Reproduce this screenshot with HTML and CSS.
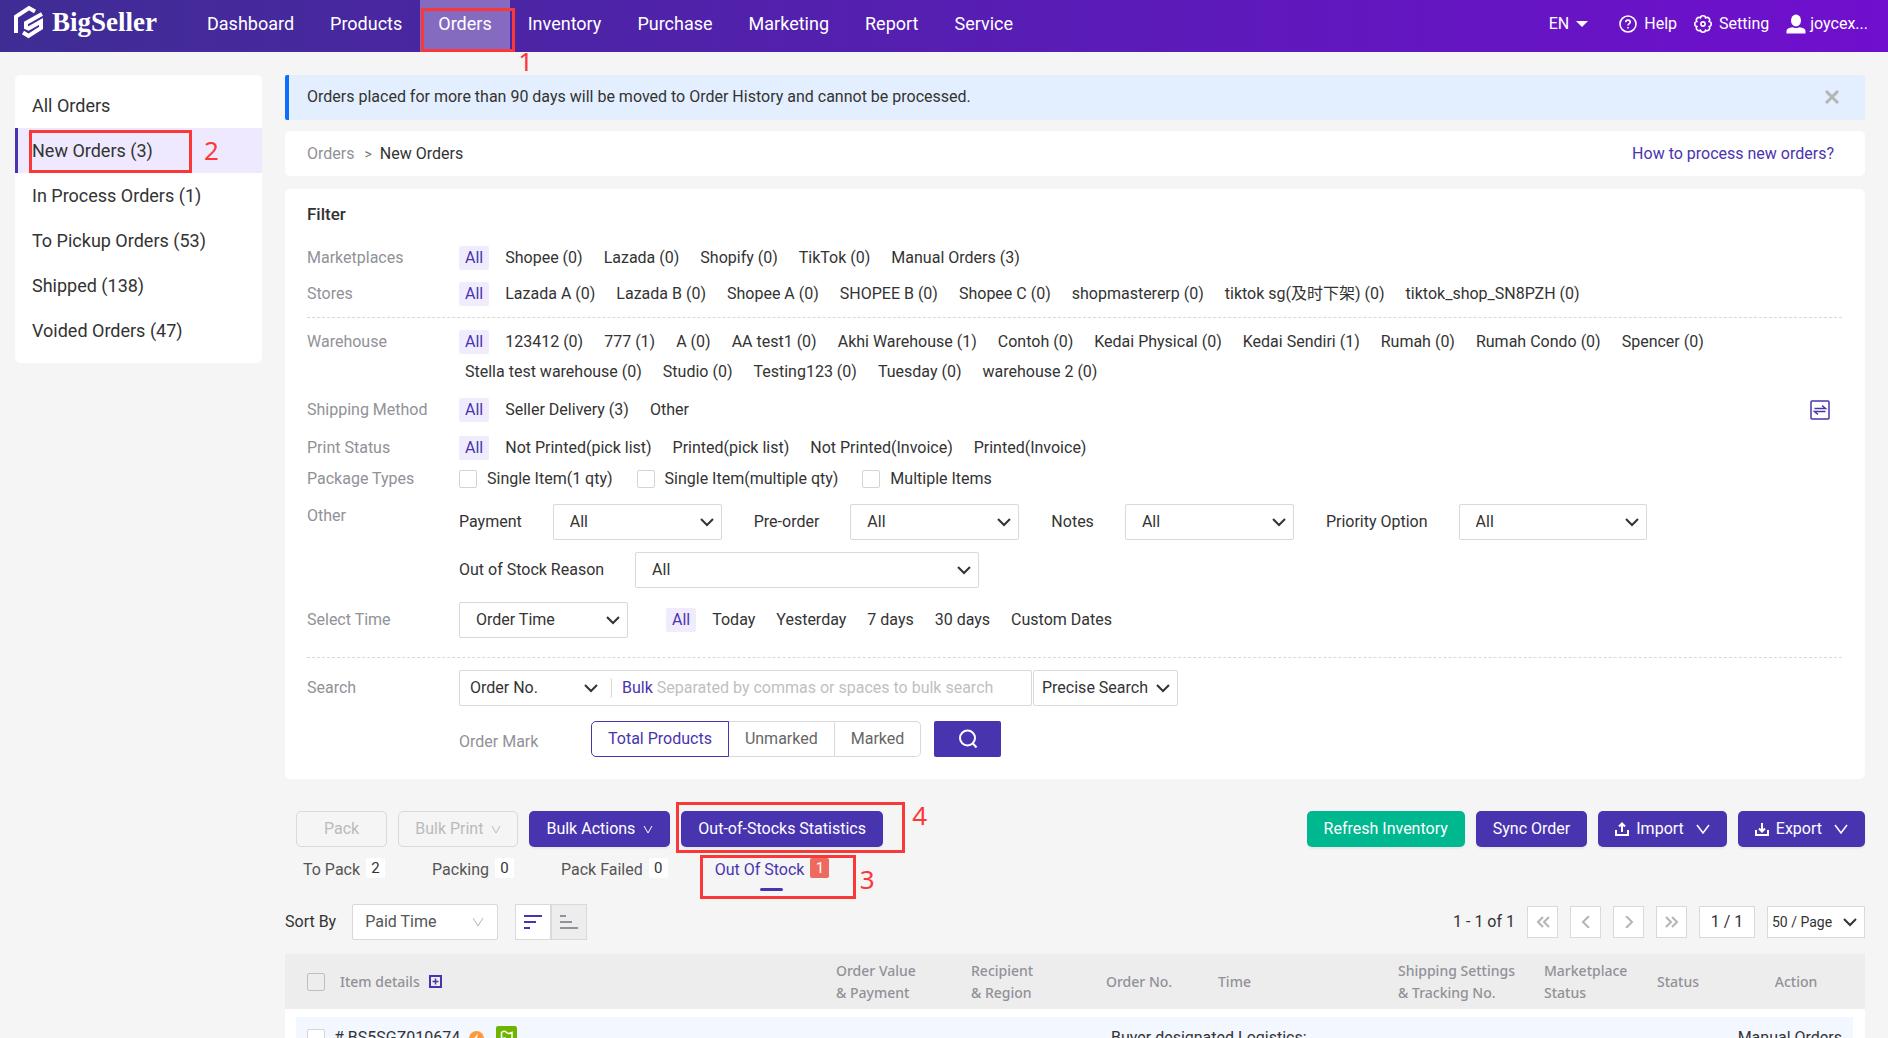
FILE: index.html
```html
<!DOCTYPE html>
<html lang="en">
<head>
<meta charset="utf-8">
<title>New Orders - BigSeller</title>
<link rel="stylesheet" href="styles.css">
</head>
<body>
<header class="topbar">
  <a class="brand" href="#">
    <svg width="30" height="34" viewBox="0 0 30 34" fill="none" stroke="#fff" stroke-width="4"><path d="M2 28V11.500L15 3L21 6.500" /><path d="M28 9L12 18V22.500L14.500 23.500L27 16.500V23L14.500 31L9 27.500"/></svg>
    <span>BigSeller</span>
  </a>
  <nav class="mainnav">
    <a href="#">Dashboard</a>
    <a href="#">Products</a>
    <a href="#" class="current">Orders<span class="mark mark-1"><b>1</b></span></a>
    <a href="#">Inventory</a>
    <a href="#">Purchase</a>
    <a href="#">Marketing</a>
    <a href="#">Report</a>
    <a href="#">Service</a>
  </nav>
  <div class="tools">
    <button class="lang" type="button">EN <svg width="12" height="6" viewBox="0 0 12 6"><path d="M0 0H12L6 6Z" fill="#fff"/></svg></button>
    <a href="#"><svg width="18" height="18" viewBox="0 0 18 18" fill="none" stroke="#fff" stroke-width="1.600"><circle cx="9" cy="9" r="8"/><path d="M6.700 7.200C6.700 4.400 11.300 4.400 11.300 7.200C11.300 8.700 9 8.700 9 10.500M9 12V13.500"/></svg>Help</a>
    <a href="#"><svg width="18" height="18" viewBox="0 0 20 20" fill="none" stroke="#fff" stroke-width="1.800"><path d="M16.930 7.130A2.950 2.950 0 0 1 16.930 12.870A2.950 2.950 0 0 1 12.870 16.930A2.950 2.950 0 0 1 7.130 16.930A2.950 2.950 0 0 1 3.070 12.870A2.950 2.950 0 0 1 3.070 7.130A2.950 2.950 0 0 1 7.130 3.070A2.950 2.950 0 0 1 12.870 3.070A2.950 2.950 0 0 1 16.930 7.130Z"/><circle cx="10" cy="10" r="2.300"/></svg>Setting</a>
    <a href="#" class="user"><svg width="20" height="20" viewBox="0 0 20 20" fill="#fff"><ellipse cx="10" cy="6.500" rx="5" ry="6"/><path d="M.500 19.500V17C.500 14.500 4 13.500 7 13.200Q10 15 13 13.200C16 13.500 19.500 14.500 19.500 17V19.500Z"/></svg>joycex...</a>
  </div>
</header>

<div class="layout">
  <aside class="sidebar">
    <a href="#">All Orders</a>
    <a href="#" class="current">New Orders (3)<span class="mark mark-2"><b>2</b></span></a>
    <a href="#">In Process Orders (1)</a>
    <a href="#">To Pickup Orders (53)</a>
    <a href="#">Shipped (138)</a>
    <a href="#">Voided Orders (47)</a>
  </aside>

  <main>
    <div class="notice">
      <span>Orders placed for more than 90 days will be moved to Order History and cannot be processed.</span>
      <button type="button" aria-label="Close"><svg width="14" height="14" viewBox="0 0 14 14" stroke="#b5b5b5" stroke-width="3"><path d="M1 1L13 13M13 1L1 13"/></svg></button>
    </div>
    <div class="crumbs">
      <a href="#">Orders</a><span class="sep">&gt;</span><span>New Orders</span>
      <a class="help" href="#">How to process new orders?</a>
    </div>

    <section class="filter">
      <h2>Filter</h2>
      <div class="row"><span class="name">Marketplaces</span>
        <div class="opts"><a href="#" class="on">All</a><a href="#">Shopee (0)</a><a href="#">Lazada (0)</a><a href="#">Shopify (0)</a><a href="#">TikTok (0)</a><a href="#">Manual Orders (3)</a></div></div>
      <div class="row"><span class="name">Stores</span>
        <div class="opts"><a href="#" class="on">All</a><a href="#">Lazada A (0)</a><a href="#">Lazada B (0)</a><a href="#">Shopee A (0)</a><a href="#">SHOPEE B (0)</a><a href="#">Shopee C (0)</a><a href="#">shopmastererp (0)</a><a href="#">tiktok sg(及时下架) (0)</a><a href="#">tiktok_shop_SN8PZH (0)</a></div></div>
      <hr class="first">
      <div class="row tall"><span class="name">Warehouse</span>
        <div class="opts"><a href="#" class="on">All</a><a href="#">123412 (0)</a><a href="#">777 (1)</a><a href="#">A (0)</a><a href="#">AA test1 (0)</a><a href="#">Akhi Warehouse (1)</a><a href="#">Contoh (0)</a><a href="#">Kedai Physical (0)</a><a href="#">Kedai Sendiri (1)</a><a href="#">Rumah (0)</a><a href="#">Rumah Condo (0)</a><a href="#">Spencer (0)</a><a href="#">Stella test warehouse (0)</a><a href="#">Studio (0)</a><a href="#">Testing123 (0)</a><a href="#">Tuesday (0)</a><a href="#">warehouse 2 (0)</a></div></div>
      <div class="row wide"><span class="name">Shipping Method</span>
        <div class="opts"><a href="#" class="on">All</a><a href="#">Seller Delivery (3)</a><a href="#">Other</a></div>
        <button type="button" class="swap" aria-label="Switch view"><svg width="20" height="20" viewBox="0 0 20 20" fill="none" stroke="#4934b0" stroke-width="1.500"><rect x="1" y="1" width="18" height="18" rx="1"/><path d="M4.500 8.500H15.500L12 5.500M15.500 11.500H4.500L8 14.500"/></svg></button></div>
      <div class="row wide"><span class="name">Print Status</span>
        <div class="opts"><a href="#" class="on">All</a><a href="#">Not Printed(pick list)</a><a href="#">Printed(pick list)</a><a href="#">Not Printed(Invoice)</a><a href="#">Printed(Invoice)</a></div></div>
      <div class="row package"><span class="name">Package Types</span>
        <div class="checks"><label><input type="checkbox">Single Item(1 qty)</label><label><input type="checkbox">Single Item(multiple qty)</label><label><input type="checkbox">Multiple Items</label></div></div>
      <div class="row other"><span class="name">Other</span>
        <div class="groups">
          <div class="fields">
            <label>Payment<select><option>All</option></select></label>
            <label>Pre-order<select><option>All</option></select></label>
            <label>Notes<select><option>All</option></select></label>
            <label>Priority Option<select class="w-priority"><option>All</option></select></label>
          </div>
          <div class="fields">
            <label>Out of Stock Reason<select class="w-reason"><option>All</option></select></label>
          </div>
        </div></div>
      <div class="row time"><span class="name">Select Time</span>
        <select aria-label="Time type"><option>Order Time</option></select>
        <div class="opts"><a href="#" class="on">All</a><a href="#">Today</a><a href="#">Yesterday</a><a href="#">7 days</a><a href="#">30 days</a><a href="#">Custom Dates</a></div></div>
      <hr>
      <form class="row search"><span class="name">Search</span>
        <div class="searchbox">
          <select aria-label="Search field"><option>Order No.</option></select>
          <button type="button">Bulk</button>
          <input type="text" aria-label="Search text" placeholder="Separated by commas or spaces to bulk search">
        </div>
        <select class="precise" aria-label="Search mode"><option>Precise Search</option></select>
      </form>
      <div class="row marks"><span class="name"></span>
        <span class="name sub">Order Mark</span>
        <div class="segment"><button type="button" class="on">Total Products</button><button type="button">Unmarked</button><button type="button">Marked</button></div>
        <button type="button" class="go" aria-label="Search"><svg width="20" height="22" viewBox="0 0 20 22" fill="none" stroke="#fff" stroke-width="2"><circle cx="9.500" cy="10" r="7.500"/><path d="M14.500 15L18.500 19.500"/></svg></button>
      </div>
    </section>

    <div class="actions">
      <button class="btn off pack" type="button" disabled>Pack</button>
      <button class="btn off" type="button" disabled>Bulk Print<svg class="v" width="10" height="9" viewBox="0 0 10 9"><path d="M1 1L5 8L9 1"/></svg></button>
      <button class="btn" type="button">Bulk Actions<svg class="v" width="10" height="9" viewBox="0 0 10 9"><path d="M1 1L5 8L9 1"/></svg></button>
      <span class="anchor"><button class="btn" type="button">Out-of-Stocks Statistics</button><span class="mark mark-4"><b>4</b></span></span>
      <span class="grow"></span>
      <button class="btn green" type="button">Refresh Inventory</button>
      <button class="btn" type="button">Sync Order</button>
      <button class="btn" type="button"><svg class="io" width="14" height="14" viewBox="0 0 14 14"><path d="M1 8V13H13V8M7 10V2M4 4.500L7 1.500L10 4.500"/></svg>Import<svg class="v big" width="14" height="10" viewBox="0 0 14 10"><path d="M1 1L7 9L13 1"/></svg></button>
      <button class="btn" type="button"><svg class="io" width="14" height="14" viewBox="0 0 14 14"><path d="M1 8V13H13V8M7 1V9M4 6.500L7 9.500L10 6.500"/></svg>Export<svg class="v big" width="14" height="10" viewBox="0 0 14 10"><path d="M1 1L7 9L13 1"/></svg></button>
    </div>

    <nav class="tabs">
      <a href="#">To Pack<i>2</i></a>
      <a href="#">Packing<i>0</i></a>
      <a href="#">Pack Failed<i>0</i></a>
      <a href="#" class="on">Out Of Stock<i>1</i><span class="mark mark-3"><b>3</b></span></a>
    </nav>

    <div class="sortbar">
      <label>Sort By<select><option>Paid Time</option></select></label>
      <div class="order">
        <button type="button" class="on" aria-label="Descending"><svg width="18" height="16" viewBox="0 0 18 16" stroke="#4934b0" stroke-width="2"><path d="M0 2H18M0 8H12M0 14H6"/></svg></button><button type="button" aria-label="Ascending"><svg width="18" height="16" viewBox="0 0 18 16" stroke="#919198" stroke-width="2"><path d="M0 2H6M0 8H12M0 14H18"/></svg></button>
      </div>
      <div class="pager">
        <span>1 - 1 of 1</span>
        <button type="button" aria-label="First"><svg width="14" height="12" viewBox="0 0 14 12"><path d="M7 1L2 6L7 11M13 1L8 6L13 11"/></svg></button>
        <button type="button" aria-label="Previous"><svg width="14" height="12" viewBox="0 0 14 12"><path d="M10 0L4 6L10 12"/></svg></button>
        <button type="button" aria-label="Next"><svg width="14" height="12" viewBox="0 0 14 12"><path d="M4 0L10 6L4 12"/></svg></button>
        <button type="button" aria-label="Last"><svg width="14" height="12" viewBox="0 0 14 12"><path d="M1 1L6 6L1 11M7 1L12 6L7 11"/></svg></button>
        <span class="page">1 / 1</span>
        <select aria-label="Page size"><option>50 / Page</option></select>
      </div>
    </div>

    <table class="orders">
      <colgroup><col><col class="c-value"><col class="c-value"><col class="c-no"><col class="c-time"><col class="c-ship"><col class="c-market"><col class="c-status"><col class="c-action"></colgroup>
      <thead><tr>
        <th><span class="item"><input type="checkbox" aria-label="Select all">Item details<svg width="13" height="13" viewBox="0 0 13 13" fill="none" stroke="#4934b0" stroke-width="2"><rect x="1" y="1" width="11" height="11"/><path d="M6.500 3.500V9.500M3.500 6.500H9.500" stroke-width="1.500"/></svg></span></th>
        <th>Order Value<br>&amp; Payment</th><th>Recipient<br>&amp; Region</th><th>Order No.</th><th>Time</th><th>Shipping Settings<br>&amp; Tracking No.</th><th>Marketplace<br>Status</th><th>Status</th><th class="center">Action</th>
      </tr></thead>
      <tbody>
        <tr class="space"><td colspan="9"></td></tr>
        <tr class="head">
          <td colspan="3"><span class="item"><input type="checkbox" aria-label="Select order"><span># BS5SGZ010674</span><svg width="15" height="15" viewBox="0 0 15 15"><circle cx="7.500" cy="7.500" r="7.500" fill="#ff9a3c"/><path d="M9 2.500L4.500 8H7L6 12.500L10.500 7H8Z" fill="#fff"/></svg><svg class="flag" width="21" height="24" viewBox="0 0 21 24"><rect width="21" height="24" rx="2" fill="#6fb500"/><path d="M5.500 19V6.500C8 4.500 9.500 5 10.500 6.500C12 8 14 7.500 16 6.500V13C13 14.500 11.500 13.500 10 12.500C8.500 11.500 7 12 5.500 13" fill="none" stroke="#fff" stroke-width="1.500"/></svg></span></td>
          <td colspan="3" class="logistics">Buyer designated Logistics:</td>
          <td colspan="3" class="source">Manual Orders</td>
        </tr>
      </tbody>
    </table>
  </main>
</div>
</body>
</html>
```
FILE: styles.css
```css
*{box-sizing:border-box}
html,body{height:100%}
body{margin:0;overflow:hidden;background:#f5f5f5;color:#333;font-family:Roboto,"Noto Sans CJK SC",sans-serif;font-size:16px;line-height:24px}
a{color:inherit;text-decoration:none}
button,select,input{font:inherit;color:inherit;margin:0}
button{padding:0;border:0;background:none;cursor:pointer}
svg{display:block;flex:none}

/* Top bar */
.topbar{display:flex;align-items:stretch;height:52px;background:linear-gradient(90deg,#3f2d94,#5b1bb8 60%,#700fce);color:#fff}
.brand{display:flex;align-items:center;gap:8px;width:189px;padding:0 0 8px 14px;font:bold 27px/30px "Liberation Serif",serif}
.mainnav{display:flex;font-size:18px;line-height:48px}
.mainnav a{position:relative;padding:0 18px}
.mainnav .current{background:rgba(255,255,255,.32)}
.tools{display:flex;align-items:center;gap:17px;margin-left:auto;padding:0 20px 4px 0}
.tools a,.lang{display:flex;align-items:center;gap:7px}
.tools .user{gap:4px}
.lang{margin-right:14px}

/* Numbered callouts */
.mark{position:absolute;border:3px solid #fb3838;pointer-events:none}
.mark b{position:absolute;color:#fb3838;font:400 26px/26px "Noto Sans",sans-serif}
.mark-1{left:1px;right:-5px;top:8px;bottom:0}
.mark-1 b{left:94px;top:37px}
.mark-2{left:14px;top:2px;width:163px;height:43px}
.mark-2 b{left:172px;top:4px}
.mark-3{left:-15px;top:8px;width:156px;height:44px}
.mark-3 b{left:157px;top:8px}
.mark-4{left:-5px;top:-9px;width:229px;height:51px}
.mark-4 b{left:233px;top:-3px}

/* Page frame */
.layout{display:flex;align-items:flex-start;gap:23px;padding:23px 23px 0 15px}
.sidebar{flex:none;width:247px;padding:8px 0 10px;border-radius:5px;background:#fff;font-size:18px}
.sidebar a{position:relative;display:block;padding-left:17px;line-height:45px}
.sidebar .current{background:#eee9fe;box-shadow:inset 3px 0 #4934b0}
main{flex:1;min-width:0}

.notice{display:flex;align-items:center;justify-content:space-between;height:45px;padding:0 26px 2px 18px;border-left:4px solid #0d6efd;border-radius:2px;background:#e3effe}
.crumbs{display:flex;align-items:center;height:45px;margin:11px 0 13px;padding:0 31px 0 22px;border-radius:5px;background:#fff}
.crumbs a{color:#919198}
.sep{margin:0 8px 0 10px;color:#777;font-size:14px}
.crumbs .help{margin-left:auto;color:#4934b0}

/* Filter card */
.filter{padding:13px 23px 22px 22px;border-radius:5px;background:#fff}
.filter h2{margin:0 0 14px;font-size:17px;line-height:24px;font-weight:500}
.row{display:flex;align-items:center;min-height:36px}
.name{flex:none;width:152px;color:#919198}
.opts{display:flex;flex-wrap:wrap;gap:0 9px}
.opts a{padding:0 6px;border-radius:2px}
.opts .on{margin-right:1px;background:#f0ecfe;color:#4934b0}
hr{margin:19px 0 12px;border:0;border-top:1px dashed #d9d9d9}
hr.first{margin:5px 0 9px}
.tall{align-items:flex-start;margin-bottom:4px}
.tall .name{line-height:30px}
.tall .opts{row-gap:6px;padding:3px 0;max-width:1330px}
.wide{min-height:38px}
.swap{margin:0 12px 0 auto}
.package{min-height:24px}
.checks,.checks label{display:flex;align-items:center}
.checks{gap:24px}
.checks label{gap:10px}
input[type=checkbox]{appearance:none;flex:none;width:18px;height:18px;border:1px solid #d4d4d8;border-radius:2px;background:#fff}
select{appearance:none;width:169px;height:36px;padding:0 30px 0 16px;border:1px solid #d9d9d9;border-radius:2px;background:#fff url("data:image/svg+xml,%3Csvg xmlns='http://www.w3.org/2000/svg' width='14' height='9' fill='none' stroke='%23333' stroke-width='2'%3E%3Cpath d='M1 1l6 6 6-6'/%3E%3C/svg%3E") no-repeat right 7px center}
.other{align-items:flex-start;margin-top:13px}
.groups{display:grid;gap:12px}
.fields{display:flex;flex-wrap:wrap;gap:12px 32px}
.fields label{display:flex;align-items:center;gap:31px}
.w-priority{width:188px}
.w-reason{width:344px}
.time{margin-top:14px}
.time .opts{margin-left:38px}
.searchbox{display:flex;align-items:center;width:573px;height:36px;margin-right:1px;border:1px solid #d9d9d9;border-radius:2px}
.searchbox select{width:152px;height:20px;padding:0 0 0 10px;border:0;border-right:1px solid #d9d9d9;line-height:20px;background-position:right 13px center}
.searchbox button{margin:0 4px 0 10px;color:#4934b0}
.searchbox input{flex:1;min-width:0;padding:0;border:0;outline:0;background:none}
.searchbox input::placeholder{color:#bfbfbf;opacity:1}
.precise{width:145px;padding:0 0 0 8px}
.marks{margin-top:15px}
.marks .sub{width:132px;padding-top:5px}
.segment{display:flex}
.segment button{height:36px;padding:0 16px;border:1px solid #d9d9d9;border-left:0;color:#666}
.segment button:last-child{border-radius:0 5px 5px 0}
.segment .on{border:1px solid #4934b0;border-radius:5px 0 0 5px;color:#4934b0}
.go{display:grid;place-items:center;width:67px;height:36px;margin-left:13px;border-radius:2px;background:#4934b0}

/* Actions */
.actions{display:flex;gap:11px;margin-top:32px;padding-left:11px}
.btn{display:flex;align-items:center;height:36px;padding:0 16px;border:1px solid transparent;border-radius:5px;background:#4934b0;background-clip:border-box;color:#fff;box-shadow:0 2px 2px rgba(0,0,0,.05);white-space:nowrap}
.off{border-color:#d9d9d9;background:#f5f5f5;color:#bbb;box-shadow:none}
.pack{padding:0 27px}
.green{background:#00b890}
.v,.io{fill:none;stroke:currentColor}
.v{margin-left:8px}
.big{margin-left:12px;stroke-width:1.5}
.io{margin-right:7px;stroke-width:2}
.anchor{position:relative}
.grow{flex:1}

.tabs{display:flex;gap:47px;height:57px;padding-left:18px;color:#555}
.tabs a{position:relative;display:flex;align-items:flex-start;gap:6px;height:44px;padding-top:11px}
.tabs i{min-width:19px;height:20px;border-radius:2px;background:#fff;color:#333;font-size:15px;line-height:20px;font-style:normal;text-align:center}
.tabs .on{color:#4934b0}
.tabs .on i{background:#ec6a5e;color:#fff}
.tabs .on::after{content:"";position:absolute;left:50%;bottom:0;width:23px;height:3px;margin-left:-12px;border-radius:2px;background:#4934b0}

.sortbar{display:flex;align-items:center}
.sortbar label{display:flex;align-items:center;gap:16px}
.sortbar label select{width:146px;padding-left:12px;color:#555;background-image:url("data:image/svg+xml,%3Csvg xmlns='http://www.w3.org/2000/svg' width='14' height='10' fill='none' stroke='%23b5b5b5'%3E%3Cpath d='M2 1l5 8 5-8'/%3E%3C/svg%3E");background-position:right 12px center}
.order{display:flex;margin-left:17px}
.order button{display:grid;place-items:center;width:36px;height:36px;border:1px solid #d9d9d9;background:#ededed}
.order .on{background:#fff}
.pager{display:flex;align-items:center;gap:12px;margin-left:auto}
.pager button,.page{display:grid;place-items:center;width:31px;height:32px;border:1px solid #d9d9d9;background:#fff}
.pager .page{width:56px}
.pager svg{fill:none;stroke:#b5b5b5;stroke-width:2}
.pager select{width:98px;height:32px;padding:0 0 0 4px;border-radius:0;font-size:14px}

/* Orders table */
.orders{width:100%;margin-top:14px;table-layout:fixed;border-collapse:separate;border-spacing:0;background:#fff}
.c-value{width:135px}.c-no{width:112px}.c-time{width:180px}.c-ship{width:146px}.c-market{width:113px}.c-status{width:80px}.c-action{width:138px}
th{height:55px;padding:0 0 0 10px;background:#ededed;color:#919198;font:500 14px/22px "Noto Sans",sans-serif;text-align:left}
th:first-child{padding-left:22px}
th input[type=checkbox]{margin-right:6px;border-color:#bfbfbf;background:none}
th.center{padding:0;text-align:center}
td{padding:0}
.item{display:flex;align-items:center;gap:9px}
.space td{height:8px}
.head td{height:42px;background:#f3f7ff}
.head td:first-child{padding-left:11px;border-left:11px solid #fff}
.head td:last-child{padding-right:11px;border-right:12px solid #fff}
.flag{margin-left:3px}
.logistics{padding-left:15px}
.source{text-align:right}
```
